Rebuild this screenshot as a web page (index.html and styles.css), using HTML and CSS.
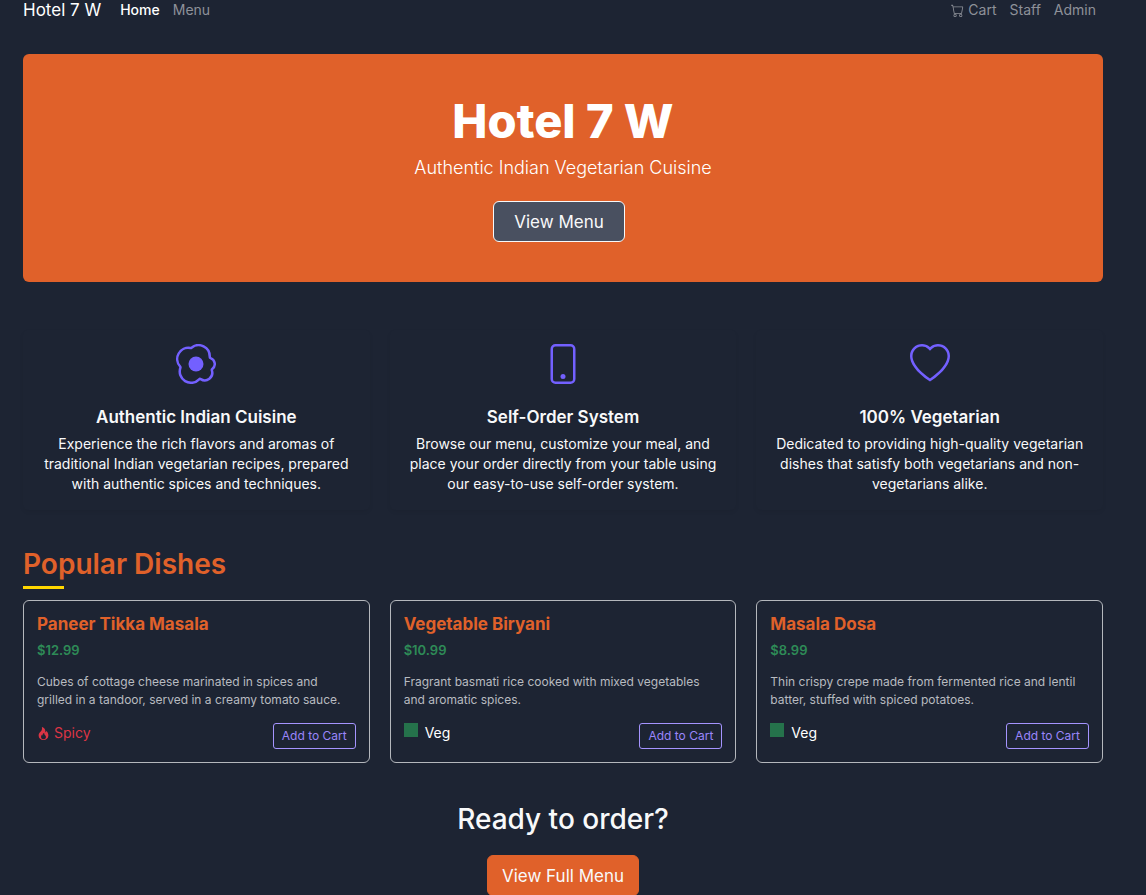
FILE: index.html
```html
<!DOCTYPE html>
<html lang="en">
<head>
    <meta charset="UTF-8">
    <meta name="viewport" content="width=device-width, initial-scale=1.0">
    <title>Hotel 7 W</title>
    <link rel="stylesheet" href="styles.css">
</head>
<body>

    <!-- Navbar -->
    <nav class="navbar">
        <a class="brand" href="#">Hotel 7 W</a>
        <div class="nav-links">
            <a class="active" href="#">Home</a>
            <a href="#menu">Menu</a>
        </div>
        <div class="nav-links nav-right">
            <a href="#cart">
                <svg class="icon" viewBox="0 0 16 16" aria-hidden="true"><path d="M0 1.5A.5.5 0 0 1 .5 1H2a.5.5 0 0 1 .485.379L2.89 3H14.5a.5.5 0 0 1 .491.592l-1.5 8A.5.5 0 0 1 13 12H4a.5.5 0 0 1-.491-.408L2.01 3.607 1.61 2H.5a.5.5 0 0 1-.5-.5M3.102 4l1.313 7h8.17l1.313-7zM5 12a2 2 0 1 0 0 4 2 2 0 0 0 0-4m7 0a2 2 0 1 0 0 4 2 2 0 0 0 0-4m-7 1a1 1 0 1 1 0 2 1 1 0 0 1 0-2m7 0a1 1 0 1 1 0 2 1 1 0 0 1 0-2"/></svg>
                Cart
            </a>
            <a href="#staff">Staff</a>
            <a href="#admin">Admin</a>
        </div>
    </nav>

    <main>
        <!-- Hero -->
        <section class="hero">
            <h1>Hotel 7 W</h1>
            <p>Authentic Indian Vegetarian Cuisine</p>
            <button class="btn btn-hero" type="button">View Menu</button>
        </section>

        <!-- Features -->
        <section class="row features">
            <div class="feature">
                <svg class="feature-icon" viewBox="0 0 16 16" aria-hidden="true"><path d="M8 11a3 3 0 1 0 0-6 3 3 0 0 0 0 6"/><path d="M13.997 5.17a5 5 0 0 0-8.101-4.09A5 5 0 0 0 1.28 9.342a5 5 0 0 0 8.336 5.109 3.5 3.5 0 0 0 5.201-4.065 3.001 3.001 0 0 0-.822-5.216zm-1-.034a1 1 0 0 0 .668.977 2.001 2.001 0 0 1 .547 3.478 1 1 0 0 0-.341 1.113 2.5 2.5 0 0 1-3.715 2.905 1 1 0 0 0-1.262.152 4 4 0 0 1-6.67-4.087 1 1 0 0 0-.2-1 4 4 0 0 1 3.693-6.61 1 1 0 0 0 .8-.2 4 4 0 0 1 6.48 3.273z"/></svg>
                <h5>Authentic Indian Cuisine</h5>
                <p>Experience the rich flavors and aromas of traditional Indian vegetarian recipes, prepared with authentic spices and techniques.</p>
            </div>
            <div class="feature">
                <svg class="feature-icon" viewBox="0 0 16 16" aria-hidden="true"><path d="M11 1a1 1 0 0 1 1 1v12a1 1 0 0 1-1 1H5a1 1 0 0 1-1-1V2a1 1 0 0 1 1-1zM5 0a2 2 0 0 0-2 2v12a2 2 0 0 0 2 2h6a2 2 0 0 0 2-2V2a2 2 0 0 0-2-2z"/><path d="M8 14a1 1 0 1 0 0-2 1 1 0 0 0 0 2"/></svg>
                <h5>Self-Order System</h5>
                <p>Browse our menu, customize your meal, and place your order directly from your table using our easy-to-use self-order system.</p>
            </div>
            <div class="feature">
                <svg class="feature-icon" viewBox="0 0 16 16" aria-hidden="true"><path d="m8 2.748-.717-.737C5.6.281 2.514.878 1.4 3.053c-.523 1.023-.641 2.5.314 4.385.92 1.815 2.834 3.989 6.286 6.357 3.452-2.368 5.365-4.542 6.286-6.357.955-1.886.838-3.362.314-4.385C13.486.878 10.4.28 8.717 2.01zM8 15C-7.333 4.868 3.279-3.04 7.824 1.143q.09.083.176.171a3 3 0 0 1 .176-.17C12.72-3.042 23.333 4.867 8 15"/></svg>
                <h5>100% Vegetarian</h5>
                <p>Dedicated to providing high-quality vegetarian dishes that satisfy both vegetarians and non-vegetarians alike.</p>
            </div>
        </section>

        <!-- Popular dishes -->
        <h2 class="section-title">Popular Dishes</h2>
        <section class="row" id="menu">
            <div class="dish">
                <h5>Paneer Tikka Masala</h5>
                <div class="price">$12.99</div>
                <p>Cubes of cottage cheese marinated in spices and grilled in a tandoor, served in a creamy tomato sauce.</p>
                <div class="dish-footer">
                    <span class="tag spicy">
                        <svg class="icon" viewBox="0 0 16 16" aria-hidden="true"><path d="M8 16c3.314 0 6-2 6-5.5 0-1.5-.5-4-2.5-6 .25 1.5-1.25 2-1.25 2C11 4 9 .5 6 0c.357 2 .5 4-2 6-1.25 1-2 2.729-2 4.5C2 14 4.686 16 8 16m0-1c-1.657 0-3-1-3-2.75 0-.75.25-2 1.25-3C6.125 10 7 10.5 7 10.5c-.375-1.25.5-3.25 2-3.5-.179 1-.25 2 1 3 .625.5 1 1.364 1 2.25C11 14 9.657 15 8 15"/></svg>
                        Spicy
                    </span>
                    <button class="btn-cart" type="button">Add to Cart</button>
                </div>
            </div>
            <div class="dish">
                <h5>Vegetable Biryani</h5>
                <div class="price">$10.99</div>
                <p>Fragrant basmati rice cooked with mixed vegetables and aromatic spices.</p>
                <div class="dish-footer">
                    <span class="tag veg"><span class="veg-mark"></span>Veg</span>
                    <button class="btn-cart" type="button">Add to Cart</button>
                </div>
            </div>
            <div class="dish">
                <h5>Masala Dosa</h5>
                <div class="price">$8.99</div>
                <p>Thin crispy crepe made from fermented rice and lentil batter, stuffed with spiced potatoes.</p>
                <div class="dish-footer">
                    <span class="tag veg"><span class="veg-mark"></span>Veg</span>
                    <button class="btn-cart" type="button">Add to Cart</button>
                </div>
            </div>
        </section>

        <!-- Call to action -->
        <section class="cta">
            <h3>Ready to order?</h3>
            <button class="btn btn-primary" type="button">View Full Menu</button>
        </section>
    </main>

</body>
</html>
```
FILE: styles.css
```css
* {
    box-sizing: border-box;
}

body {
    margin: 0;
    padding: 0 43px 0 23px;
    background-color: #1d2433;
    color: #f8f9fa;
    font-family: Inter, "Open Sans", sans-serif;
    font-size: 14px;
    line-height: 20px;
}

h1, h2, h3, h5, p {
    margin: 0;
}

a {
    color: inherit;
    text-decoration: none;
}

button {
    font-family: inherit;
    cursor: pointer;
}

.icon {
    width: 13px;
    height: 13px;
    fill: currentColor;
}

/* Navbar */
.navbar {
    display: flex;
    align-items: center;
    gap: 19px;
    height: 20px;
    padding-right: 7px;
}

.brand {
    font-size: 17px;
    color: #fff;
}

.nav-links {
    display: flex;
    gap: 13px;
    color: #8e9199;
}

.nav-links a {
    display: flex;
    align-items: center;
    gap: 4px;
}

.nav-links .active {
    color: #fff;
    font-weight: 500;
}

.nav-right {
    margin-left: auto;
}

/* Hero */
.hero {
    margin-top: 34px;
    padding: 39px 40px 40px;
    border-radius: 6px;
    background-color: #e0612a;
    color: #fff;
    text-align: center;
}

.hero h1 {
    margin-bottom: 7px;
    font-size: 47px;
    font-weight: 800;
    line-height: 56px;
}

.hero p {
    margin-bottom: 21px;
    font-size: 18px;
    font-weight: 300;
    line-height: 24px;
}

.btn {
    height: 41px;
    padding: 0 20px;
    border: 1px solid #f8f9fa;
    border-radius: 6px;
    color: #f8f9fa;
    font-size: 17px;
    line-height: 24px;
}

.btn-hero {
    margin-right: 8px;
    background-color: #495060;
}

.btn-primary {
    padding: 0 14px;
    border-color: #e0612a;
    background-color: #e0612a;
}

/* Columns */
.row {
    display: grid;
    grid-template-columns: repeat(3, 1fr);
    gap: 20px;
}

.features {
    margin-top: 48px;
}

.feature {
    padding: 14px 13px 16px;
    border-radius: 6px;
    box-shadow: 0 2px 4px rgba(0, 0, 0, 0.06);
    text-align: center;
}

.feature-icon {
    display: block;
    width: 40px;
    height: 40px;
    margin: 0 auto 23px;
    fill: #7360ff;
}

.feature h5 {
    margin-bottom: 7px;
    font-size: 17px;
    font-weight: 600;
    line-height: 20px;
}

/* Popular dishes */
.section-title {
    margin: 36px 0 11px;
    color: #e0612a;
    font-size: 28px;
    font-weight: 600;
    line-height: 36px;
}

.section-title::after {
    content: "";
    display: block;
    width: 41px;
    height: 3px;
    margin-top: 4px;
    background-color: #ffd700;
}

.dish {
    padding: 13px;
    border: 1px solid #b5b8bd;
    border-radius: 6px;
}

.dish h5 {
    margin-bottom: 6px;
    color: #e0612a;
    font-size: 17px;
    font-weight: 700;
    line-height: 20px;
}

.price {
    margin-bottom: 13px;
    color: #2e8b57;
    font-size: 13px;
    font-weight: 600;
}

.dish p {
    margin-bottom: 14px;
    color: #b8bbc0;
    font-size: 12px;
    line-height: 18px;
}

.dish-footer {
    display: flex;
    justify-content: space-between;
    align-items: flex-start;
}

.tag {
    display: flex;
    align-items: center;
    gap: 4px;
}

.spicy {
    color: #dc3545;
}

.veg {
    align-items: flex-start;
    gap: 7px;
    color: #fff;
}

.veg-mark {
    width: 14px;
    height: 14px;
    background-color: #25724b;
}

.btn-cart {
    height: 26px;
    padding: 0 8px;
    border: 1px solid #a594ff;
    border-radius: 3px;
    background: transparent;
    color: #9a86fb;
    font-size: 12px;
    line-height: 18px;
}

/* Call to action */
.cta {
    margin-top: 40px;
    text-align: center;
}

.cta h3 {
    margin-bottom: 20px;
    font-size: 28px;
    font-weight: 500;
    line-height: 32px;
}
```
